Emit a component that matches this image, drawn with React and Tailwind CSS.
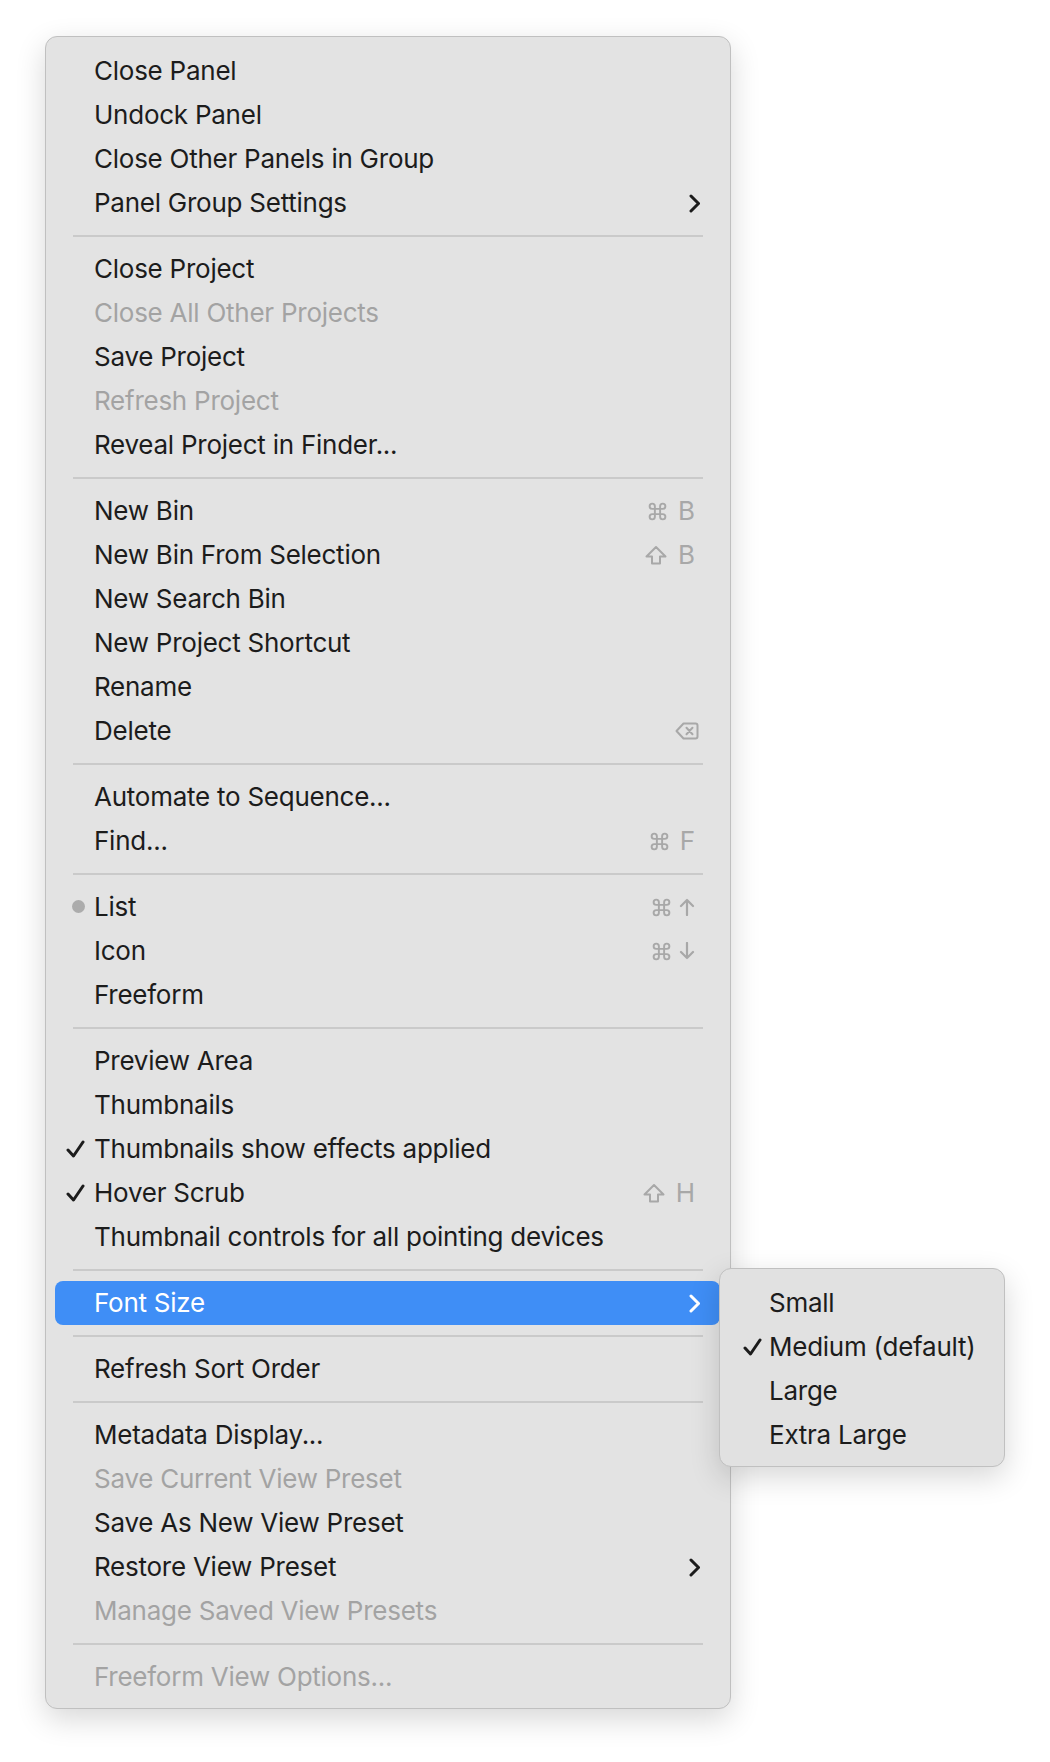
import React from "react";

const FONT = { fontFamily: 'Inter, "Noto Sans", "Liberation Sans", sans-serif' };

function Cmd({ className = "" }) {
  return (
    <svg viewBox="0 0 24 24" className={className} fill="none" stroke="currentColor" strokeWidth="2.2" strokeLinecap="round" strokeLinejoin="round">
      <path d="M15 6v12a3 3 0 1 0 3-3H6a3 3 0 1 0 3 3V6a3 3 0 1 0-3 3h12a3 3 0 1 0-3-3" />
    </svg>
  );
}
function Shift({ className = "" }) {
  return (
    <svg viewBox="0 0 24 20" className={className} fill="none" stroke="currentColor" strokeWidth="2" strokeLinejoin="round">
      <path d="M8 18.5v-7H2.5L12 2l9.5 9.5H16v7z" />
    </svg>
  );
}
function Del({ className = "" }) {
  return (
    <svg viewBox="0 0 24 20" className={className} fill="none" stroke="currentColor" strokeWidth="2" strokeLinecap="round" strokeLinejoin="round">
      <path d="M8.5 2.5h12a2 2 0 0 1 2 2v11a2 2 0 0 1-2 2h-12L1.5 10z" />
      <path d="M11.5 6.8l6 6.4M17.5 6.8l-6 6.4" />
    </svg>
  );
}
function ArrowUp({ className = "" }) {
  return (
    <svg viewBox="0 0 16 18" className={className} fill="none" stroke="currentColor" strokeWidth="2.2" strokeLinecap="round" strokeLinejoin="round">
      <path d="M8 17V2M2 8l6-6 6 6" />
    </svg>
  );
}
function ArrowDown({ className = "" }) {
  return (
    <svg viewBox="0 0 16 18" className={className} fill="none" stroke="currentColor" strokeWidth="2.2" strokeLinecap="round" strokeLinejoin="round">
      <path d="M8 1v15M2 10l6 6 6-6" />
    </svg>
  );
}
function Chevron({ className = "" }) {
  return (
    <svg viewBox="0 0 11 19" className={className} fill="none" stroke="currentColor" strokeWidth="3" strokeLinecap="round" strokeLinejoin="round">
      <path d="M2 2l7.5 7.5L2 17" />
    </svg>
  );
}
function Check({ className = "" }) {
  return (
    <svg viewBox="0 0 19 18" className={className} fill="none" stroke="currentColor" strokeWidth="3" strokeLinecap="round" strokeLinejoin="round">
      <path d="M2 10l5.5 6L17 2" />
    </svg>
  );
}

function Shortcut({ sc }) {
  const [a, b] = sc;
  return (
    <div className="flex items-center text-[#a8a8a8] text-[26px] leading-none">
      {a === "cmd" && <Cmd className="w-[21px] h-[21px]" />}
      {a === "shift" && <Shift className="w-[24px] h-[20px]" />}
      {a === "del" && <Del className="w-[24px] h-[20px]" />}
      {b === "up" && <ArrowUp className="ml-[7px] w-[16px] h-[18px]" />}
      {b === "down" && <ArrowDown className="ml-[7px] w-[16px] h-[18px]" />}
      {b && b.length === 1 && <span className="ml-[10px]">{b}</span>}
    </div>
  );
}

const groups = [
  [
    { t: "Close Panel" },
    { t: "Undock Panel" },
    { t: "Close Other Panels in Group" },
    { t: "Panel Group Settings", sub: true },
  ],
  [
    { t: "Close Project" },
    { t: "Close All Other Projects", dis: true },
    { t: "Save Project" },
    { t: "Refresh Project", dis: true },
    { t: "Reveal Project in Finder..." },
  ],
  [
    { t: "New Bin", sc: ["cmd", "B"] },
    { t: "New Bin From Selection", sc: ["shift", "B"] },
    { t: "New Search Bin" },
    { t: "New Project Shortcut" },
    { t: "Rename" },
    { t: "Delete", sc: ["del"] },
  ],
  [
    { t: "Automate to Sequence..." },
    { t: "Find...", sc: ["cmd", "F"] },
  ],
  [
    { t: "List", bullet: true, sc: ["cmd", "up"] },
    { t: "Icon", sc: ["cmd", "down"] },
    { t: "Freeform" },
  ],
  [
    { t: "Preview Area" },
    { t: "Thumbnails" },
    { t: "Thumbnails show effects applied", check: true },
    { t: "Hover Scrub", check: true, sc: ["shift", "H"] },
    { t: "Thumbnail controls for all pointing devices" },
  ],
  [{ t: "Font Size", sub: true, active: true }],
  [{ t: "Refresh Sort Order" }],
  [
    { t: "Metadata Display..." },
    { t: "Save Current View Preset", dis: true },
    { t: "Save As New View Preset" },
    { t: "Restore View Preset", sub: true },
    { t: "Manage Saved View Presets", dis: true },
  ],
  [{ t: "Freeform View Options...", dis: true }],
];

function Row({ it }) {
  const color = it.active ? "text-white" : it.dis ? "text-[#a3a3a3]" : "text-[#1c1c1c]";
  return (
    <div
      className={
        "relative h-[44px] ml-[9px] mr-[10px] pl-[39px] flex items-center rounded-[8px] " +
        (it.active ? "bg-[#3f8ef6] " : "") +
        color
      }
    >
      {it.check && <Check className="absolute left-[11px] top-[13px] w-[19px] h-[18px]" />}
      {it.bullet && <span className="absolute left-[17px] top-[15px] w-[13px] h-[13px] rounded-full bg-[#acacac]" />}
      <span className="text-[26px] leading-none tracking-[-0.25px] whitespace-nowrap">{it.t}</span>
      <div className="ml-auto flex items-center">
        {it.sub && <Chevron className="mr-[20px] w-[11px] h-[19px]" />}
        {it.sc && (
          <div className={it.sc[0] === "del" ? "mr-[21px]" : "mr-[25px]"}>
            <Shortcut sc={it.sc} />
          </div>
        )}
      </div>
    </div>
  );
}

function Sep() {
  return (
    <div className="h-[22px] flex items-center px-[27px]">
      <div className="h-[2px] w-full bg-[#cacaca]" />
    </div>
  );
}

export default function App() {
  const sub = [
    { t: "Small" },
    { t: "Medium (default)", check: true },
    { t: "Large" },
    { t: "Extra Large" },
  ];
  return (
    <div style={FONT} className="relative w-[1050px] h-[1762px] bg-white pt-[36px] pl-[45px] overflow-hidden">
      <div className="w-[686px] rounded-[12px] border border-[#c0c0c0] bg-[#e3e3e3] pt-[12px] pb-[9px] shadow-[0_10px_30px_rgba(0,0,0,0.16)]">
        {groups.map((g, gi) => (
          <React.Fragment key={gi}>
            {gi > 0 && <Sep />}
            {g.map((it, i) => (
              <Row key={i} it={it} />
            ))}
          </React.Fragment>
        ))}
      </div>

      <div className="absolute left-[719px] top-[1268px] w-[286px] rounded-[12px] border border-[#c0c0c0] bg-[#e1e1e1] pt-[12px] pb-[9px] shadow-[0_10px_30px_rgba(0,0,0,0.16)]">
        {sub.map((it, i) => (
          <div key={i} className="relative h-[44px] pl-[49px] flex items-center text-[#1c1c1c]">
            {it.check && <Check className="absolute left-[23px] top-[13px] w-[19px] h-[18px]" />}
            <span className="text-[26px] leading-none tracking-[-0.25px] whitespace-nowrap">{it.t}</span>
          </div>
        ))}
      </div>
    </div>
  );
}
